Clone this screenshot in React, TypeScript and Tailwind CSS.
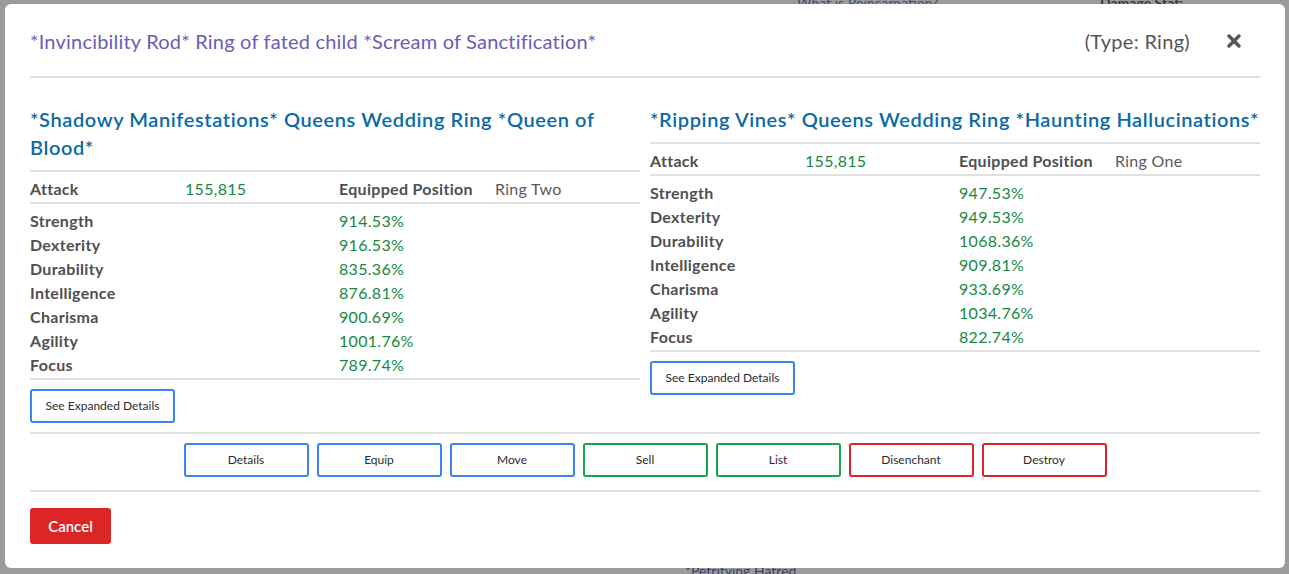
import React from 'react'

type Stat = { label: string, value: string }

interface ItemProps {
    name: string
    attack: string
    position: string
    stats: Stat[]
}

const leftItem: ItemProps = {
    name: "*Shadowy Manifestations* Queens Wedding Ring *Queen of Blood*",
    attack: "155,815",
    position: "Ring Two",
    stats: [
        { label: "Strength", value: "914.53%" },
        { label: "Dexterity", value: "916.53%" },
        { label: "Durability", value: "835.36%" },
        { label: "Intelligence", value: "876.81%" },
        { label: "Charisma", value: "900.69%" },
        { label: "Agility", value: "1001.76%" },
        { label: "Focus", value: "789.74%" },
    ],
}

const rightItem: ItemProps = {
    name: "*Ripping Vines* Queens Wedding Ring *Haunting Hallucinations*",
    attack: "155,815",
    position: "Ring One",
    stats: [
        { label: "Strength", value: "947.53%" },
        { label: "Dexterity", value: "949.53%" },
        { label: "Durability", value: "1068.36%" },
        { label: "Intelligence", value: "909.81%" },
        { label: "Charisma", value: "933.69%" },
        { label: "Agility", value: "1034.76%" },
        { label: "Focus", value: "822.74%" },
    ],
}

const actions = [
    { label: "Details", border: "border-[#3b82f6]" },
    { label: "Equip", border: "border-[#3b82f6]" },
    { label: "Move", border: "border-[#3b82f6]" },
    { label: "Sell", border: "border-[#16a34a]" },
    { label: "List", border: "border-[#16a34a]" },
    { label: "Disenchant", border: "border-[#dc2626]" },
    { label: "Destroy", border: "border-[#dc2626]" },
]

const Divider = () => <div className="h-[2px] bg-[#e0e0e0]" />

const ItemColumn = ({ name, attack, position, stats }: ItemProps) => (
    <div className="flex flex-col">
        <h3 className="text-[20px] leading-[28px] font-semibold tracking-[0.6px] text-[#0a6aa3] mb-[9px]">{name}</h3>
        <Divider />
        <div className="grid grid-cols-[155px_154px_156px_1fr] pt-[5px] pb-[1px] text-[16px] leading-[24px] tracking-[0.3px]">
            <span className="font-bold text-[#4f4f4f]">Attack</span>
            <span className="text-[#16883f]">{attack}</span>
            <span className="font-bold text-[#4f4f4f]">Equipped Position</span>
            <span className="text-[#5a5a5a]">{position}</span>
        </div>
        <Divider />
        <div className="pt-[5px] pb-[1px] text-[16px] leading-[24px] tracking-[0.3px]">
            {stats.map((s) => (
                <div key={s.label} className="grid grid-cols-[309px_1fr]">
                    <span className="font-bold text-[#4f4f4f]">{s.label}</span>
                    <span className="text-[#16883f]">{s.value}</span>
                </div>
            ))}
        </div>
        <Divider />
        <div className="mt-[9px]">
            <button className="h-[34px] w-[145px] border-2 border-[#3b82f6] rounded-[3px] bg-white text-[12px] text-[#2b2b2b]">
                See Expanded Details
            </button>
        </div>
    </div>
)

export default function App() {
    return (
        <div className="relative w-[1289px] h-[574px] overflow-hidden bg-[#9b9b9b]" style={{ fontFamily: 'Lato, "Noto Sans", sans-serif' }}>
            {/* page behind the overlay */}
            <span className="absolute left-[797px] top-0 leading-[6px] overflow-hidden h-[5px] text-[14px] text-[#3d4f7a]">What is Reincarnation?</span>
            <span className="absolute left-[1100px] top-0 leading-[6px] overflow-hidden h-[5px] text-[14px] font-bold text-[#3a3a3a]">Damage Stat:</span>

            <div className="relative ml-[5px] mt-[4px] w-[1280px] h-[564px] bg-white rounded-[6px] px-[25px] pt-[23px]">
                {/* header */}
                <div className="flex items-center h-[28px]">
                    <h2 className="flex-1 text-[20px] leading-[28px] tracking-[0.2px] text-[#6b5cb5]">
                        *Invincibility Rod* Ring of fated child *Scream of Sanctification*
                    </h2>
                    <span className="text-[20px] tracking-[0.3px] text-[#555]">(Type: Ring)</span>
                    <button className="ml-[37px] mr-[19px] text-[#555]" aria-label="Close">
                        <svg width="14" height="14" viewBox="0 0 14 14">
                            <path d="M2 2 L12 12 M12 2 L2 12" stroke="currentColor" strokeWidth="3.4" strokeLinecap="round" />
                        </svg>
                    </button>
                </div>
                <div className="mt-[21px] mb-[27px]">
                    <Divider />
                </div>

                {/* compare columns */}
                <div className="grid grid-cols-2 gap-[10px] mb-[9px]">
                    <ItemColumn {...leftItem} />
                    <ItemColumn {...rightItem} />
                </div>
                <Divider />

                {/* actions */}
                <div className="flex justify-center gap-[8px] mt-[9px] mb-[13px]">
                    {actions.map((a) => (
                        <button key={a.label} className={`w-[125px] h-[34px] border-2 ${a.border} rounded-[3px] bg-white text-[12px] text-[#2b2b2b]`}>
                            {a.label}
                        </button>
                    ))}
                </div>
                <Divider />

                <div className="mt-[16px]">
                    <button className="h-[36px] w-[81px] rounded-[3px] bg-[#dc2626] text-white text-[15px] font-semibold">
                        Cancel
                    </button>
                </div>
            </div>
            <span className="absolute left-[685px] top-[568px] leading-[6px] overflow-hidden h-[6px] text-[14px] text-[#3d3a70]">*Petrifying Hatred</span>
        </div>
    )
}
